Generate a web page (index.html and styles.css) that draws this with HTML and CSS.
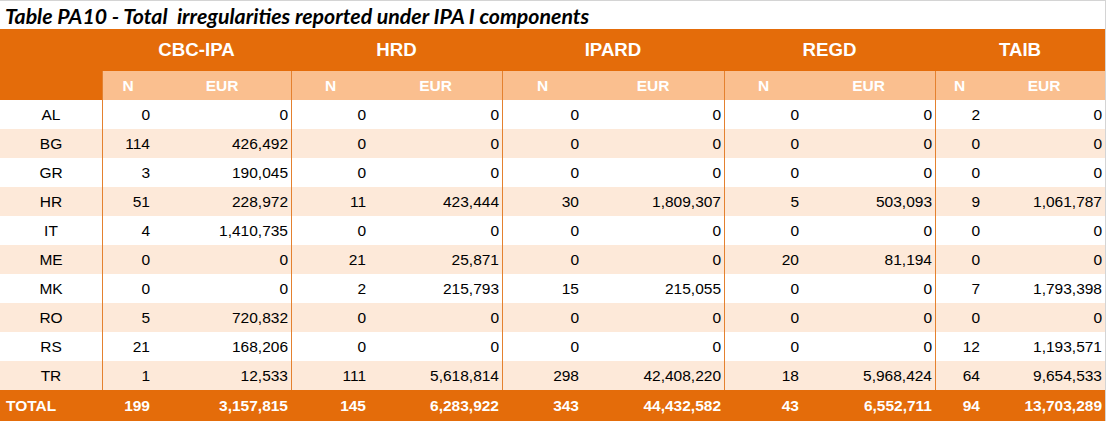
FILE: index.html
```html
<!DOCTYPE html>
<html>
<head>
<meta charset="utf-8">
<link rel="stylesheet" href="styles.css">
</head>
<body>
<div class="sheet">
  <div class="title">Table PA10 - Total  irregularities reported under IPA I components</div>
  <div class="head">
    <div class="corner"></div>
    <div class="grp">CBC-IPA</div>
    <div class="grp">HRD</div>
    <div class="grp">IPARD</div>
    <div class="grp">REGD</div>
    <div class="grp">TAIB</div>
    <div class="sub n">N</div><div class="sub">EUR</div>
    <div class="sub n">N</div><div class="sub">EUR</div>
    <div class="sub n">N</div><div class="sub">EUR</div>
    <div class="sub n">N</div><div class="sub">EUR</div>
    <div class="sub n">N</div><div class="sub">EUR</div>
  </div>
  <div class="body">
    <div class="row"><div class="k">AL</div><div class="c n">0</div><div class="c">0</div><div class="c n">0</div><div class="c">0</div><div class="c n">0</div><div class="c">0</div><div class="c n">0</div><div class="c">0</div><div class="c n">2</div><div class="c">0</div></div>
    <div class="row"><div class="k">BG</div><div class="c n">114</div><div class="c">426,492</div><div class="c n">0</div><div class="c">0</div><div class="c n">0</div><div class="c">0</div><div class="c n">0</div><div class="c">0</div><div class="c n">0</div><div class="c">0</div></div>
    <div class="row"><div class="k">GR</div><div class="c n">3</div><div class="c">190,045</div><div class="c n">0</div><div class="c">0</div><div class="c n">0</div><div class="c">0</div><div class="c n">0</div><div class="c">0</div><div class="c n">0</div><div class="c">0</div></div>
    <div class="row"><div class="k">HR</div><div class="c n">51</div><div class="c">228,972</div><div class="c n">11</div><div class="c">423,444</div><div class="c n">30</div><div class="c">1,809,307</div><div class="c n">5</div><div class="c">503,093</div><div class="c n">9</div><div class="c">1,061,787</div></div>
    <div class="row"><div class="k">IT</div><div class="c n">4</div><div class="c">1,410,735</div><div class="c n">0</div><div class="c">0</div><div class="c n">0</div><div class="c">0</div><div class="c n">0</div><div class="c">0</div><div class="c n">0</div><div class="c">0</div></div>
    <div class="row"><div class="k">ME</div><div class="c n">0</div><div class="c">0</div><div class="c n">21</div><div class="c">25,871</div><div class="c n">0</div><div class="c">0</div><div class="c n">20</div><div class="c">81,194</div><div class="c n">0</div><div class="c">0</div></div>
    <div class="row"><div class="k">MK</div><div class="c n">0</div><div class="c">0</div><div class="c n">2</div><div class="c">215,793</div><div class="c n">15</div><div class="c">215,055</div><div class="c n">0</div><div class="c">0</div><div class="c n">7</div><div class="c">1,793,398</div></div>
    <div class="row"><div class="k">RO</div><div class="c n">5</div><div class="c">720,832</div><div class="c n">0</div><div class="c">0</div><div class="c n">0</div><div class="c">0</div><div class="c n">0</div><div class="c">0</div><div class="c n">0</div><div class="c">0</div></div>
    <div class="row"><div class="k">RS</div><div class="c n">21</div><div class="c">168,206</div><div class="c n">0</div><div class="c">0</div><div class="c n">0</div><div class="c">0</div><div class="c n">0</div><div class="c">0</div><div class="c n">12</div><div class="c">1,193,571</div></div>
    <div class="row"><div class="k">TR</div><div class="c n">1</div><div class="c">12,533</div><div class="c n">111</div><div class="c">5,618,814</div><div class="c n">298</div><div class="c">42,408,220</div><div class="c n">18</div><div class="c">5,968,424</div><div class="c n">64</div><div class="c">9,654,533</div></div>
    <div class="row total"><div class="k">TOTAL</div><div class="c n">199</div><div class="c">3,157,815</div><div class="c n">145</div><div class="c">6,283,922</div><div class="c n">343</div><div class="c">44,432,582</div><div class="c n">43</div><div class="c">6,552,711</div><div class="c n">94</div><div class="c">13,703,289</div></div>
  </div>
</div>
</body>
</html>
```

FILE: styles.css
```css
:root {
  --cols: 102px 51px 138px 78px 133px 80px 142px 78px 133px 48px 122px;
  --dark: #e46c0a;
  --light: #fabf8f;
  --stripe: #fde9d9;
  --line: #e4812f;
}
html, body {
  margin: 0;
  padding: 0;
  background: #fff;
}
.sheet {
  width: 1105px;
  border-top: 1px solid #d4d4d4;
  border-right: 1px solid #d4d4d4;
  font-family: "Liberation Sans", Arial, sans-serif;
}
.title {
  height: 28px;
  line-height: 30px;
  padding-left: 5px;
  font-family: Lato, "Liberation Sans", sans-serif;
  font-weight: 700;
  font-style: italic;
  font-size: 21.3px;
  white-space: pre;
  color: #000;
  overflow: hidden;
}
.head {
  display: grid;
  grid-template-columns: var(--cols);
  grid-template-rows: 42px 29px;
  background: var(--dark);
  color: #fff;
  font-weight: 700;
}
.corner {
  grid-row: 1 / span 2;
}
.grp {
  grid-column: span 2;
  text-align: center;
  font-size: 18.67px;
  line-height: 42px;
}
.sub {
  background: var(--light);
  text-align: center;
  font-size: 15.5px;
  line-height: 29px;
}
.sub.n {
  border-left: 1px solid var(--line);
}
.row {
  display: grid;
  grid-template-columns: var(--cols);
  height: 29px;
  font-size: 15.5px;
  line-height: 29px;
  color: #000;
  background: #fff;
}
.row:nth-child(even) {
  background: var(--stripe);
}
.k {
  text-align: center;
}
.c {
  text-align: right;
  padding-right: 3px;
}
.c.n {
  border-left: 1px solid var(--line);
}
.row.total {
  height: 31px;
  line-height: 31px;
  background: var(--dark);
  color: #fff;
  font-weight: 700;
}
.row.total .k {
  text-align: left;
  padding-left: 6px;
}
.row.total .c.n {
  border-left: none;
}
```
